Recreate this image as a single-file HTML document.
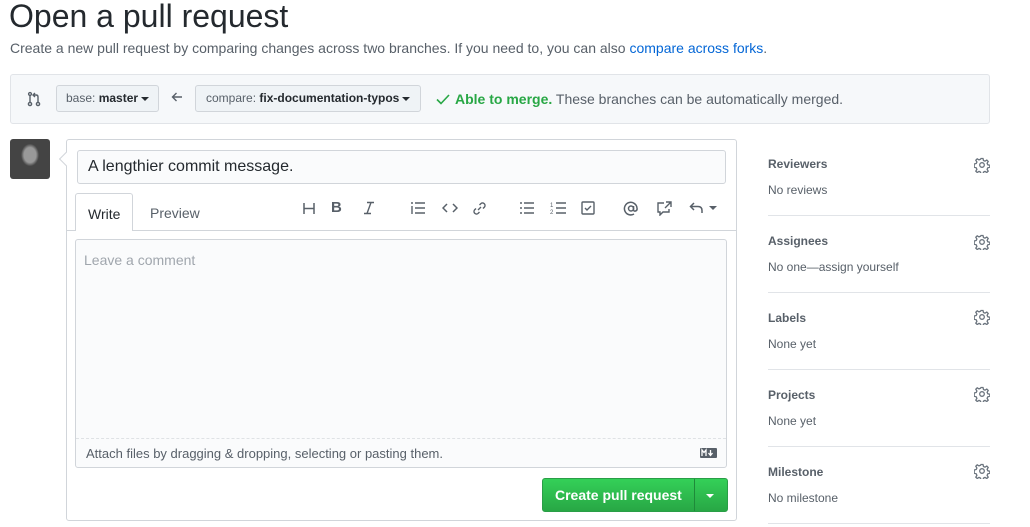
<!DOCTYPE html><html><head><meta charset="utf-8"><style>
*{box-sizing:border-box}body{margin:0;width:1030px;height:527px;overflow:hidden;background:#fff;font-family:"Liberation Sans",sans-serif;color:#24292e;position:relative}
.a{position:absolute}
.btn{position:absolute;background:#eff3f6;border:1px solid #d1d5da;border-radius:3px;font-size:12px;color:#586069;padding:0 9px;line-height:25px;height:27px}
.btn b{color:#24292e}
.car{display:inline-block;width:0;height:0;border-left:4px solid transparent;border-right:4px solid transparent;border-top:4px solid #24292e;vertical-align:middle;margin-left:3px}
.ic{position:absolute;top:199px;color:#586069}
.tb{position:absolute;top:201px}
.sh{position:absolute;left:768px;font-size:12px;font-weight:bold;color:#586069}
.sv{position:absolute;left:768px;font-size:12px;color:#586069}
.sep{position:absolute;left:768px;width:222px;height:1px;background:#e1e4e8}
.gear{position:absolute;left:974px}
</style></head><body>
<div class="a" style="left:9px;top:-2px;font-size:32px;font-weight:300">Open a pull request</div>
<div class="a" style="left:10px;top:40px;font-size:14px;color:#586069">Create a new pull request by comparing changes across two branches. If you need to, you can also <span style="color:#0366d6">compare across forks</span>.</div>
<div class="a" style="left:10px;top:74px;width:980px;height:50px;background:#f6f8fa;border:1px solid #e1e4e8;border-radius:3px"></div>
<svg class="a" style="left:27px;top:91px" width="14" height="16" viewBox="0 0 14 16" fill="none" stroke="#586069" stroke-width="1.4"><circle cx="3" cy="13" r="1.6"/><circle cx="11" cy="13" r="1.6"/><circle cx="3" cy="3" r="1.4"/><path d="M3 4.5v6.9M11 11.4V6q0-2-2-2H6M8 2L6 4l2 2"/></svg>
<div class="btn" style="left:56px;top:85px">base: <b>master</b><span class="car"></span></div>
<svg class="a" style="left:171px;top:91px" width="12" height="12" fill="none" stroke="#586069" stroke-width="1.4"><path d="M11 6H1.5M5.5 2L1.5 6l4 4"/></svg>
<div class="btn" style="left:195px;top:85px;padding:0 10px">compare: <b>fix-documentation-typos</b><span class="car"></span></div>
<svg class="a" style="left:436px;top:93px" width="14" height="12" fill="none" stroke="#28a745" stroke-width="1.6"><path d="M1 6.5l4 4L13 2"/></svg>
<div class="a" style="left:455px;top:91px;font-size:14px;color:#586069"><span style="color:#28a745"><b>Able to merge.</b></span> These branches can be automatically merged.</div>
<div class="a" style="left:10px;top:139px;width:40px;height:40px;border-radius:3px;background:radial-gradient(ellipse 8px 10px at 50% 40%,#999 0 6px,#444 9px),linear-gradient(90deg,#555,#222 30%,#333 70%,#666)"></div>
<div class="a" style="left:66px;top:139px;width:671px;height:382px;border:1px solid #d1d5da;border-radius:3px"></div>
<div class="a" style="left:61px;top:154px;width:10px;height:10px;background:#fff;border-left:1px solid #d1d5da;border-bottom:1px solid #d1d5da;transform:rotate(45deg)"></div>
<div class="a" style="left:77px;top:150px;width:649px;height:34px;border:1px solid #d1d5da;border-radius:3px;background:#fafbfc;font-size:16px;padding:7px 10px">A lengthier commit message.</div>
<div class="a" style="left:67px;top:230px;width:669px;height:1px;background:#d1d5da"></div>
<div class="a" style="left:75px;top:193px;width:58px;height:38px;border:1px solid #d1d5da;border-bottom:none;border-radius:3px 3px 0 0;background:#fff;font-size:14px;padding:12px 12px">Write</div>
<div class="a" style="left:150px;top:205px;font-size:14px;color:#586069">Preview</div>
<svg class="tb" style="left:302px" width="14" height="14" fill="none" stroke="#586069" stroke-width="1.5"><path d="M2 2v11M12 2v11M2 7.5h10"/></svg>
<div class="ic" style="left:331px;font-size:15px;font-weight:bold">B</div>
<svg class="tb" style="left:362px" width="14" height="14" fill="none" stroke="#586069" stroke-width="1.4"><path d="M5 1.5h7M2 12.5h7M9 1.5L5 12.5"/></svg>
<svg class="tb" style="left:410px" width="16" height="14" fill="none" stroke="#586069" stroke-width="1.4"><path d="M5 2h10M5 7h10M5 12h10M1 2h2M2 5v8"/></svg>
<svg class="tb" style="left:442px" width="16" height="14" fill="none" stroke="#586069" stroke-width="1.5"><path d="M5 3L1 7l4 4M11 3l4 4-4 4"/></svg>
<svg class="tb" style="left:472px" width="15" height="15" fill="none" stroke="#586069" stroke-width="1.4"><path d="M6 9l3-3M7.5 4l1.5-1.5a2.5 2.5 0 0 1 3.5 3.5L11 7.5M7.5 11L6 12.5a2.5 2.5 0 0 1-3.5-3.5L4 7.5"/></svg>
<svg class="tb" style="left:519px" width="16" height="14" fill="none" stroke="#586069" stroke-width="1.4"><path d="M5 2h10M5 7h10M5 12h10M1 2h2M1 7h2M1 12h2"/></svg>
<svg class="tb" style="left:550px" width="16" height="14" fill="none" stroke="#586069" stroke-width="1.4"><path d="M6 2h10M6 7h10M6 12h10"/><text x="0" y="6" font-size="6" fill="#586069" stroke="none" font-family="Liberation Sans">1</text><text x="0" y="13" font-size="6" fill="#586069" stroke="none" font-family="Liberation Sans">2</text></svg>
<svg class="a" style="left:581px;top:201px" width="14" height="14" fill="none" stroke="#586069" stroke-width="1.4"><rect x="1" y="1" width="12" height="12" rx="1"/><path d="M4 7l2 2 4-4"/></svg>
<svg class="tb" style="left:623px" width="16" height="16" fill="none" stroke="#586069" stroke-width="1.5"><circle cx="8" cy="7.5" r="2.5"/><path d="M10.5 5v3.5q0 2 2 1.5t1.5-3A6.3 6.3 0 1 0 11 13"/></svg>
<svg class="a" style="left:656px;top:201px" width="16" height="15" fill="none" stroke="#586069" stroke-width="1.4"><path d="M8 2H2v9h2v3l3-3h6V8M10 1h5v5M15 1l-6 6"/></svg>
<svg class="tb" style="left:689px" width="14" height="14" fill="none" stroke="#586069" stroke-width="1.5"><path d="M5 2L1.5 5.5 5 9M1.5 5.5H9q4 0 4 4V12"/></svg>
<span class="a car" style="left:706px;top:206px;border-top-color:#586069"></span>
<div class="a" style="left:75px;top:239px;width:652px;height:229px;border:1px solid #d1d5da;border-radius:3px;background:#fafbfc"></div>
<div class="a" style="left:76px;top:438px;width:650px;border-top:1px dashed #dfe2e5"></div>
<div class="a" style="left:84px;top:252px;font-size:14px;color:#a0a6ad">Leave a comment</div>
<div class="a" style="left:86px;top:446px;font-size:13px;color:#586069">Attach files by dragging &amp; dropping, selecting or pasting them.</div>
<svg class="a" style="left:700px;top:448px" width="17" height="10"><rect width="17" height="10" rx="1" fill="#586069"/><path d="M2 8V2l2 2.5L6 2v6M10.5 2v5M8.5 5l2 2.5 2-2.5" stroke="#fff" stroke-width="1.3" fill="none"/></svg>
<div class="a" style="left:542px;top:478px;width:186px;height:34px;border-radius:3px;background:linear-gradient(#34d058,#28a745);border:1px solid #2a9e47"></div>
<div class="a" style="left:694px;top:479px;width:1px;height:32px;background:#1f8a3a"></div>
<div class="a" style="left:555px;top:487px;font-size:14px;font-weight:bold;color:#fff">Create pull request</div>
<span class="a car" style="left:703px;top:494px;border-top-color:#fff"></span>
<div class="sh" style="top:157px">Reviewers</div><div class="sv" style="top:183px">No reviews</div><div class="sep" style="top:215px"></div>
<div class="sh" style="top:234px">Assignees</div><div class="sv" style="top:260px">No one—assign yourself</div><div class="sep" style="top:292px"></div>
<div class="sh" style="top:311px">Labels</div><div class="sv" style="top:337px">None yet</div><div class="sep" style="top:369px"></div>
<div class="sh" style="top:388px">Projects</div><div class="sv" style="top:414px">None yet</div><div class="sep" style="top:446px"></div>
<div class="sh" style="top:465px">Milestone</div><div class="sv" style="top:491px">No milestone</div><div class="sep" style="top:523px"></div>
<svg width="0" height="0" style="position:absolute"><defs><g id="g" fill="none" stroke="#6a737d" stroke-width="1.3"><circle cx="8" cy="8" r="2.3"/><path d="M7 1.5h2l.5 2 1.5.7 1.8-1.1 1.4 1.4-1.1 1.8.7 1.5 2 .5v2l-2 .5-.7 1.5 1.1 1.8-1.4 1.4-1.8-1.1-1.5.7-.5 2H7l-.5-2-1.5-.7-1.8 1.1-1.4-1.4 1.1-1.8-.7-1.5-2-.5V7l2-.5.7-1.5-1.1-1.8 1.4-1.4 1.8 1.1 1.5-.7z"/></g></defs></svg>
<svg class="gear" style="top:157px" width="16" height="16"><use href="#g"/></svg>
<svg class="gear" style="top:234px" width="16" height="16"><use href="#g"/></svg>
<svg class="gear" style="top:309px" width="16" height="16"><use href="#g"/></svg>
<svg class="gear" style="top:386px" width="16" height="16"><use href="#g"/></svg>
<svg class="gear" style="top:463px" width="16" height="16"><use href="#g"/></svg>
</body></html>
